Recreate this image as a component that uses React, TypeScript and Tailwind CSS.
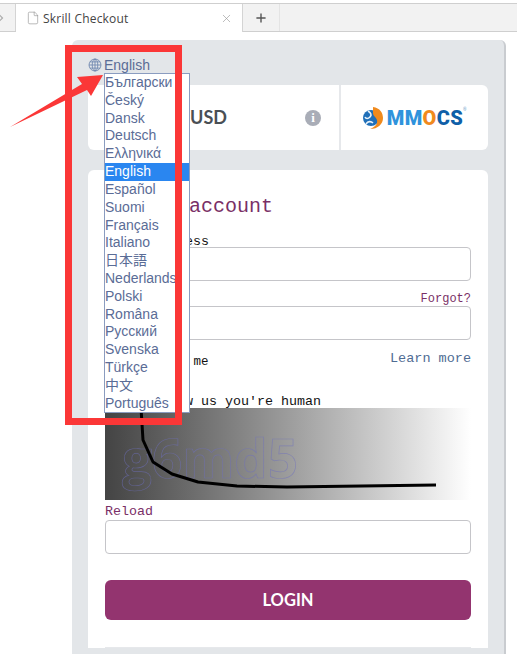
import { File, Plus, X } from "lucide-react"

const languages = [
  "Български",
  "Český",
  "Dansk",
  "Deutsch",
  "Ελληνικά",
  "English",
  "Español",
  "Suomi",
  "Français",
  "Italiano",
  "日本語",
  "Nederlands",
  "Polski",
  "Româna",
  "Русский",
  "Svenska",
  "Türkçe",
  "中文",
  "Português",
]

function TabStrip() {
  return (
    <div className="mt-[3px] flex h-[29px] border-y border-[#cfcfcf] bg-[#f2f2f2] font-['Open_Sans',sans-serif] text-[12px] leading-[18px]">
      <div className="flex w-[16px] items-center border-r border-[#d4d4d4]">
        <svg width="4" height="8" viewBox="0 0 4 8" fill="none" stroke="#aaa" strokeWidth="1.2">
          <path d="M-1 0.5l3.5 3.5-3.5 3.5" />
        </svg>
      </div>
      <div className="-mb-px flex w-[227px] items-center border-r border-[#d4d4d4] bg-white pl-[10px] pr-[9px] text-[#444]">
        <File size={14} strokeWidth={1} className="text-[#8a8a8a]" />
        <span className="ml-[3px] mt-[1px] tracking-[0.2px]">Skrill Checkout</span>
        <X size={13} strokeWidth={1.2} className="ml-auto text-[#999]" />
      </div>
      <div className="flex w-[37px] items-center justify-center border-r border-[#e4e4e4]">
        <Plus size={14} strokeWidth={2.4} className="text-[#555]" />
      </div>
    </div>
  )
}

function GlobeIcon() {
  return (
    <svg width="14" height="14" viewBox="0 0 15 15" fill="none" stroke="#6a83ad" strokeWidth="0.9">
      <circle cx="7.5" cy="7.5" r="6.4" />
      <ellipse cx="7.5" cy="7.5" rx="3" ry="6.4" />
      <path d="M7.5 1.1v12.8M1.1 7.5h12.8M2.1 4.2h10.8M2.1 10.8h10.8" />
    </svg>
  )
}

function MmocsLogo() {
  return (
    <div className="flex items-center">
      <svg width="20" height="22" viewBox="0 0 20 22">
        <circle cx="8" cy="11" r="8" fill="#1f6fb8" />
        <path d="M5 4c3 2 4 4 2 6s-4 2-5 0M3 17c2-3 5-3 7-1" stroke="#e8f2fa" strokeWidth="1.6" fill="none" />
        <path d="M10 0c7 1 10 6 10 11 0 6-5 11-13 11 5-2 8-5 7-9-1-3-4-4-4-7 0-2 0-4 0-6z" fill="#f08a1d" />
      </svg>
      <span className="ml-[4px] font-['Roboto',sans-serif] text-[20px] font-black leading-none tracking-[0.4px] text-[#2f93dc]">
        MM<span className="text-[#f08a1d]">O</span>
        <span className="text-[#0f5fa8]">CS</span>
      </span>
      <span className="mb-[14px] text-[5px] leading-none text-[#6a9cc8]">®</span>
    </div>
  )
}

function LanguageMenu() {
  return (
    <ul className="absolute left-[104px] top-[73px] w-[86px] border border-[#8a9cc0] bg-white font-['Liberation_Sans','Noto_Sans_CJK_JP',sans-serif] text-[14px] text-[#5a6c96]">
      {languages.map((lang) => (
        <li
          key={lang}
          className={`h-[17.82px] overflow-hidden whitespace-nowrap leading-[17.82px] ${
            lang === "English" ? "bg-[#2a86f0] text-white" : ""
          }`}
        >
          {lang}
        </li>
      ))}
    </ul>
  )
}

function Captcha() {
  return (
    <div className="h-[92px] bg-gradient-to-r from-[#444444] to-[#ffffff]">
      <svg width="366" height="92" viewBox="0 0 366 92" fill="none">
        <text
          x="17"
          y="70"
          fontFamily="'Open Sans', sans-serif"
          fontSize="53"
          fontWeight="700"
          stroke="#6f70c0"
          strokeWidth="0.7"
          opacity="0.55"
        >
          g6md5
        </text>
        <polyline
          points="36,0 38,32 48,54 67,66 93,74 132,78 182,79 331,77"
          stroke="#000"
          strokeWidth="3"
          strokeLinejoin="round"
        />
      </svg>
    </div>
  )
}

function Annotation() {
  return (
    <>
      <div className="absolute left-[65px] top-[45px] h-[380px] w-[117px] border-[7px] border-[#fb3737]" />
      <svg className="absolute left-0 top-0" width="120" height="140" viewBox="0 0 120 140">
        <polygon points="10,127 82,84 77,77 103,75 91,96 87,90" fill="#fb3737" />
      </svg>
    </>
  )
}

export default function App() {
  return (
    <div className="relative flex h-[654px] flex-col overflow-hidden bg-white font-['Liberation_Mono',monospace]">
      <TabStrip />

      <div className="ml-[72px] mr-[11px] mt-[8px] flex-1 rounded-t-[6px] border-r-2 border-[#c9ccd0] bg-[#e3e6e9] px-[16px] pt-[16px]">
        <div className="flex h-[18px] items-center gap-[2px] font-['Liberation_Sans',sans-serif] text-[14px] text-[#5a6c96]">
          <GlobeIcon />
          <span>English</span>
        </div>

        {/* Amount and merchant */}
        <div className="mt-[11px] flex h-[65px] rounded-[6px] bg-white">
          <div className="flex w-[253px] items-center border-r-2 border-[#e6e8eb] pl-[17px] pr-[18px]">
            <span className="w-[122px] text-right font-['Lato',sans-serif] text-[18px] font-bold text-[#4a4f55]">
              100.00 USD
            </span>
            <span className="ml-auto flex h-[16px] w-[16px] items-center justify-center rounded-full bg-[#a9adb7] font-['Liberation_Serif',serif] text-[13px] font-bold text-white">
              i
            </span>
          </div>
          <div className="flex flex-1 items-center justify-center">
            <MmocsLogo />
          </div>
        </div>

        {/* Login form */}
        <div className="mt-[20px] rounded-t-[6px] bg-white px-[17px] pt-[24px]">
          <h1 className="h-[24px] text-[20px] leading-[26px] text-[#7a2f66]">Skrill account</h1>

          <p className="mt-[15px] h-[14px] text-[13.33px] leading-[17px] text-[#111]">Email address</p>
          <div className="h-[34px] rounded-[4px] border border-[#c5c5c9]" />

          <div className="mt-[10px] flex h-[15px] items-center justify-between leading-[14px]">
            <span className="text-[13.33px] text-[#111]">Password</span>
            <a className="text-[12px] text-[#7a2f66]">Forgot?</a>
          </div>
          <div className="h-[34px] rounded-[4px] border border-[#c5c5c9]" />

          <div className="mt-[9px] flex h-[22px] justify-between">
            <label className="mt-[4px] pl-[21px] text-[12.5px] leading-[18px] text-[#111]">Remember me</label>
            <a className="mt-[1px] text-[13.5px] leading-[18px] text-[#4f6c93]">Learn more</a>
          </div>

          <p className="mt-[23px] h-[14px] text-[13.33px] leading-[16px] text-[#111]">Please show us you're human</p>
          <Captcha />
          <a className="block h-[20px] text-[13.33px] leading-[23px] text-[#7a2f66]">Reload</a>
          <div className="h-[34px] rounded-[4px] border border-[#c5c5c9]" />

          <button className="mt-[26px] h-[40px] w-full rounded-[6px] bg-[#93346f] font-['Lato',sans-serif] text-[16.5px] font-bold text-white">
            LOGIN
          </button>
          <div className="mt-[27px] border-t border-[#e6e8eb]" />
        </div>
      </div>

      <LanguageMenu />
      <Annotation />
    </div>
  )
}
